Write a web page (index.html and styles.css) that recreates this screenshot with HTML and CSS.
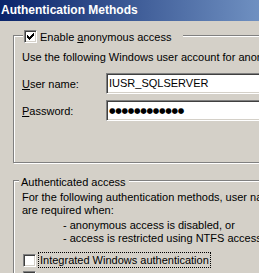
FILE: index.html
```html
<!DOCTYPE html>
<html>
<head>
<meta charset="utf-8">
<link rel="stylesheet" href="styles.css">
</head>
<body>
<div class="titlebar">Authentication Methods</div>
<div class="page">
  <div class="group g1">
    <div class="legend legend-cb">
      <span class="cb"><svg width="7" height="7" viewBox="0 0 7 7"><path d="M0 2h1v3h-1zM1 3h1v3h-1zM2 4h1v3h-1zM3 3h1v3h-1zM4 2h1v3h-1zM5 1h1v3h-1zM6 0h1v3h-1z" fill="#000"/></svg></span>
      <span class="cb-label">Enable <u>a</u>nonymous access</span>
    </div>
    <p class="line desc">Use the following Windows user account for anonymous access:</p>
    <div class="field">
      <span class="flabel"><u>U</u>ser name:</span>
      <span class="input">IUSR_SQLSERVER</span>
    </div>
    <div class="field">
      <span class="flabel"><u>P</u>assword:</span>
      <span class="input pw">●●●●●●●●●●●●</span>
    </div>
  </div>
  <div class="group g2">
    <div class="legend legend-text">Authenticated access</div>
    <p class="line first">For the following authentication methods, user name and password</p>
    <p class="line">are required when:</p>
    <p class="line indent list-start">- anonymous access is disabled, or</p>
    <p class="line indent">- access is restricted using NTFS access control lists</p>
    <div class="check-row">
      <span class="cb empty"></span>
      <span class="cb-label focus">Integrated Windows authentication</span>
    </div>
    <div class="check-row">
      <span class="cb empty"></span>
      <span class="cb-label">Digest authentication for Windows domain servers</span>
    </div>
  </div>
</div>
</body>
</html>
```
FILE: styles.css
```css
html, body {
  margin: 0;
  padding: 0;
}
body {
  width: 259px;
  height: 273px;
  overflow: hidden;
  background: #d4d0c8;
  font-family: "Liberation Sans", Arial, sans-serif;
  font-size: 11px;
  color: #000;
}
.titlebar {
  height: 21px;
  line-height: 21px;
  padding-left: 1px;
  background: linear-gradient(to right, #0a246a 0px, #6f90c1 259px);
  color: #fff;
  font-weight: bold;
  font-size: 12px;
  white-space: nowrap;
}
.page {
  padding: 14px 0 0 13px;
  width: 400px;
}
.group {
  box-sizing: border-box;
  border: 1px solid #808080;
  box-shadow: inset 1px 1px 0 #fff, 1px 1px 0 #fff;
  white-space: nowrap;
  padding-left: 8px;
}
.g1 {
  height: 128px;
}
.g2 {
  margin-top: 17px;
  height: 200px;
}
.legend {
  display: flex;
  align-items: center;
  width: max-content;
  background: #d4d0c8;
  height: 13px;
  margin-top: -6px;
}
.legend-cb {
  margin-left: 1px;
  padding: 0 12px 0 1px;
  gap: 3px;
}
.legend-text {
  margin-left: -3px;
  padding: 0 3px 0 2px;
}
.cb {
  box-sizing: border-box;
  width: 13px;
  height: 13px;
  background: #fff;
  border: 1px solid;
  border-color: #808080 #fff #fff #808080;
  box-shadow: inset 1px 1px 0 #404040, inset -1px -1px 0 #d4d0c8;
  display: inline-flex;
  align-items: center;
  justify-content: center;
  flex: none;
}
.cb svg {
  display: block;
}
.line {
  margin: 0;
  height: 13px;
  line-height: 13px;
}
.desc {
  margin-top: 8px;
}
.field {
  display: flex;
  align-items: center;
  height: 21px;
  margin-top: 9px;
}
.field + .field {
  margin-top: 6px;
}
.flabel {
  width: 84px;
  flex: none;
}
.input {
  box-sizing: border-box;
  height: 21px;
  width: 300px;
  background: #fff;
  border: 1px solid;
  border-color: #808080 #fff #fff #808080;
  box-shadow: inset 1px 1px 0 #404040, inset -1px -1px 0 #d4d0c8;
  padding-left: 2px;
  line-height: 19px;
}
.pw {
  font-family: "DejaVu Sans", sans-serif;
  font-size: 7.5px;
  letter-spacing: -0.3px;
}
.first {
  margin-top: 3px;
}
.indent {
  padding-left: 41px;
}
.list-start {
  margin-top: 2px;
}
.check-row {
  display: flex;
  align-items: center;
  gap: 3px;
  height: 16px;
  margin-top: 7px;
  padding-left: 1px;
}
.check-row + .check-row {
  margin-top: 1px;
}
.focus {
  outline: 1px dotted #000;
  padding: 1px 1px;
}
```
